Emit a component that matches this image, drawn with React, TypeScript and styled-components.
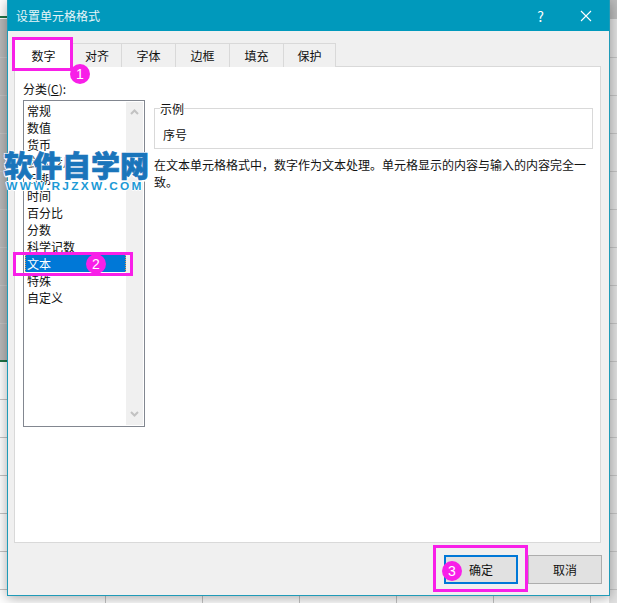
import styled, { createGlobalStyle } from "styled-components";

const GlobalStyle = createGlobalStyle`
  html, body {
    margin: 0;
    padding: 0;
  }
  body {
    height: 603px;
    overflow: hidden;
    font-family: "Noto Sans CJK SC", "Noto Sans", sans-serif;
    font-size: 12px;
    color: #111;
    background-color: #fff;
    background-image:
      linear-gradient(#217346, #217346),
      linear-gradient(#217346, #217346),
      linear-gradient(#bcbcbc, #bcbcbc),
      repeating-linear-gradient(to bottom, transparent 0 37px, #c4c4c4 37px 38px),
      repeating-linear-gradient(to right, transparent 0 96px, #c4c4c4 96px 97px),
      linear-gradient(#e2e2e2, #e2e2e2),
      linear-gradient(#b9b9b9, #b9b9b9);
    background-size: 8px 2px, 8px 2px, 8px 19px, 100% 584px, 100% 100%, 8px 603px, 8px 343px;
    background-position: left 16px, left 360px, right top, left 20px, 9px 0, right top, left 19px;
    background-repeat: no-repeat;
  }
`;

const Page = styled.div`
  padding-left: 7px;
  height: 603px;
  box-sizing: border-box;
`;

const Dialog = styled.div`
  width: 603px;
  height: 596px;
  box-sizing: border-box;
  display: flex;
  flex-direction: column;
  background: #f0f0f0;
  border: 1px solid #1f9bb8;
  border-top: none;
  box-shadow: 0 2px 12px rgba(0, 0, 0, 0.35);
`;

const TitleBar = styled.div`
  height: 31px;
  flex: none;
  display: flex;
  align-items: center;
  padding-left: 8px;
  background: #0099bc;
  color: #e6f5f8;
`;

const Title = styled.div`
  flex: 1;
  line-height: 31px;
`;

const TitleButton = styled.div<{ $width: number }>`
  width: ${(p) => p.$width}px;
  display: flex;
  justify-content: center;
  align-items: center;
  font-size: 14px;
  color: #fff;
`;

const TabStrip = styled.div`
  display: flex;
  align-items: flex-end;
  height: 36px;
  flex: none;
  padding-left: 6px;
`;

const Tab = styled.div<{ $active?: boolean; $width: number }>`
  width: ${(p) => p.$width}px;
  height: ${(p) => (p.$active ? 28 : 24)}px;
  box-sizing: border-box;
  display: flex;
  align-items: center;
  justify-content: center;
  padding-top: ${(p) => (p.$active ? 3 : 0)}px;
  background: ${(p) => (p.$active ? "#fff" : "#f0f0f0")};
  border: 1px solid #d9d9d9;
  border-bottom: none;
  border-left: ${(p) => (p.$active ? "1px solid #d9d9d9" : "none")};
  position: relative;
  z-index: ${(p) => (p.$active ? 1 : 0)};
`;

const Panel = styled.div`
  height: 477px;
  flex: none;
  margin: -1px 8px 0 6px;
  box-sizing: border-box;
  padding: 13px 7px 0 8px;
  background: #fff;
  border: 1px solid #d9d9d9;
`;

const FieldLabel = styled.div`
  height: 20px;
  line-height: 17px;

  u {
    text-underline-offset: 1px;
  }
`;

const PanelBody = styled.div`
  display: flex;
  gap: 9px;
`;

const ListBox = styled.div`
  width: 122px;
  height: 327px;
  flex: none;
  box-sizing: border-box;
  display: flex;
  padding: 1px;
  background: #fff;
  border: 1px solid #828790;
`;

const List = styled.div`
  flex: 1;
  min-width: 0;
`;

const ListItem = styled.div<{ $selected?: boolean }>`
  height: 17px;
  line-height: 18px;
  box-sizing: border-box;
  padding-left: 1px;
  color: ${(p) => (p.$selected ? "#fff" : "#111")};
  background: ${(p) => (p.$selected ? "#0078d7" : "transparent")};
  border-left: 1px ${(p) => (p.$selected ? "dotted #e0a050" : "solid transparent")};
  border-right: 1px ${(p) => (p.$selected ? "dotted #e0a050" : "solid transparent")};
`;

const ScrollBar = styled.div`
  width: 17px;
  flex: none;
  display: flex;
  flex-direction: column;
  justify-content: space-between;
  align-items: center;
  padding: 6px 0 7px;
  box-sizing: border-box;
  background: #f0f0f0;
`;

const Details = styled.div`
  flex: 1;
  min-width: 0;
`;

const SampleGroup = styled.fieldset`
  margin: 0 0 7px;
  padding: 0 8px;
  height: 49px;
  width: 439px;
  box-sizing: border-box;
  border: 1px solid #d9d9d9;
`;

const SampleLegend = styled.legend`
  padding: 0;
  margin-left: -3px;
  line-height: 17px;
`;

const SampleValue = styled.div`
  line-height: 17px;
  padding-top: 9px;
`;

const Description = styled.div`
  width: 444px;
  line-height: 17px;
`;

const Footer = styled.div`
  display: flex;
  justify-content: flex-end;
  gap: 10px;
  padding: 12px 7px 0 0;
`;

const Button = styled.div<{ $primary?: boolean }>`
  width: 74px;
  height: 29px;
  box-sizing: border-box;
  display: flex;
  align-items: center;
  justify-content: center;
  background: #e1e1e1;
  border: ${(p) => (p.$primary ? "2px solid #0078d7" : "1px solid #adadad")};
`;

/* pink annotations and the site watermark lie over the dialog */
const Overlay = styled.div`
  position: absolute;
  inset: 0;
  z-index: 5;
  pointer-events: none;
`;

const Marker = styled.div<{ $top: number; $left: number; $width: number; $height: number }>`
  position: absolute;
  top: ${(p) => p.$top}px;
  left: ${(p) => p.$left}px;
  width: ${(p) => p.$width}px;
  height: ${(p) => p.$height}px;
  box-sizing: border-box;
  border: 3px solid #f81fe8;
`;

const Badge = styled.div<{ $x: number; $y: number }>`
  position: absolute;
  left: ${(p) => p.$x - 10}px;
  top: ${(p) => p.$y - 10}px;
  width: 20px;
  height: 20px;
  border-radius: 50%;
  display: flex;
  align-items: center;
  justify-content: center;
  background: #f81fe8;
  color: #fff;
  font-family: "Liberation Sans", Arial, sans-serif;
  font-size: 14px;
`;

const Watermark = styled.div`
  position: absolute;
  left: 4px;
  top: 146px;
  width: 150px;
`;

const WatermarkTitle = styled.div`
  font-size: 29px;
  font-weight: 900;
  line-height: 36px;
  white-space: nowrap;
  color: #1a75bb;
  -webkit-text-stroke: 0.7px #1a75bb;
  text-shadow: -1px -1px 0 #fff, 1px -1px 0 #fff, -1px 1px 0 #fff, 1px 1px 0 #fff, 0 2px 0 #fff;
`;

const WatermarkUrl = styled.div`
  margin-top: -1px;
  padding-left: 2px;
  font-family: "Liberation Sans", Arial, sans-serif;
  font-size: 10.5px;
  font-weight: 700;
  line-height: 10px;
  letter-spacing: 2px;
  white-space: nowrap;
  color: #1c9ad6;
  text-shadow: -1px 0 0 #fff, 1px 0 0 #fff, 0 -1px 0 #fff, 0 1px 0 #fff;
  transform: scaleX(1.13);
  transform-origin: left center;
`;

const categories = ["常规", "数值", "货币", "会计专用", "日期", "时间", "百分比", "分数", "科学记数", "文本", "特殊", "自定义"];
const tabs = [
  { label: "对齐", width: 49 },
  { label: "字体", width: 54 },
  { label: "边框", width: 54 },
  { label: "填充", width: 54 },
  { label: "保护", width: 52 },
];

const Chevron = ({ up }: { up?: boolean }) => (
  <svg width="9" height="7" viewBox="0 0 9 7">
    <path d={up ? "M1 6 L4.5 2.5 L8 6" : "M1 1 L4.5 4.5 L8 1"} fill="none" stroke="#c2c2c2" strokeWidth="2" />
  </svg>
);

const App = () => (
  <Page>
    <GlobalStyle />
    <Dialog>
      <TitleBar>
        <Title>设置单元格格式</Title>
        <TitleButton $width={45}>?</TitleButton>
        <TitleButton $width={46}>
          <svg width="12" height="12" viewBox="0 0 12 12">
            <path d="M1 1 L11 11 M11 1 L1 11" stroke="#fff" strokeWidth="1.1" />
          </svg>
        </TitleButton>
      </TitleBar>
      <TabStrip>
        <Tab $active $width={59}>
          数字
        </Tab>
        {tabs.map((tab) => (
          <Tab key={tab.label} $width={tab.width}>
            {tab.label}
          </Tab>
        ))}
      </TabStrip>
      <Panel>
        <FieldLabel>
          分类(<u>C</u>):
        </FieldLabel>
        <PanelBody>
          <ListBox>
            <List>
              {categories.map((name) => (
                <ListItem key={name} $selected={name === "文本"}>
                  {name}
                </ListItem>
              ))}
            </List>
            <ScrollBar>
              <Chevron up />
              <Chevron />
            </ScrollBar>
          </ListBox>
          <Details>
            <SampleGroup>
              <SampleLegend>示例</SampleLegend>
              <SampleValue>序号</SampleValue>
            </SampleGroup>
            <Description>在文本单元格格式中，数字作为文本处理。单元格显示的内容与输入的内容完全一致。</Description>
          </Details>
        </PanelBody>
      </Panel>
      <Footer>
        <Button $primary>确定</Button>
        <Button>取消</Button>
      </Footer>
    </Dialog>
    <Overlay>
      <Marker $top={37} $left={12} $width={61} $height={34} />
      <Marker $top={252} $left={13} $width={120} $height={24} />
      <Marker $top={545} $left={433} $width={95} $height={47} />
      <Badge $x={80} $y={74}>1</Badge>
      <Badge $x={96} $y={264}>2</Badge>
      <Badge $x={452} $y={571}>3</Badge>
      <Watermark>
        <WatermarkTitle>软件自学网</WatermarkTitle>
        <WatermarkUrl>WWW.RJZXW.COM</WatermarkUrl>
      </Watermark>
    </Overlay>
  </Page>
);

export default App;
